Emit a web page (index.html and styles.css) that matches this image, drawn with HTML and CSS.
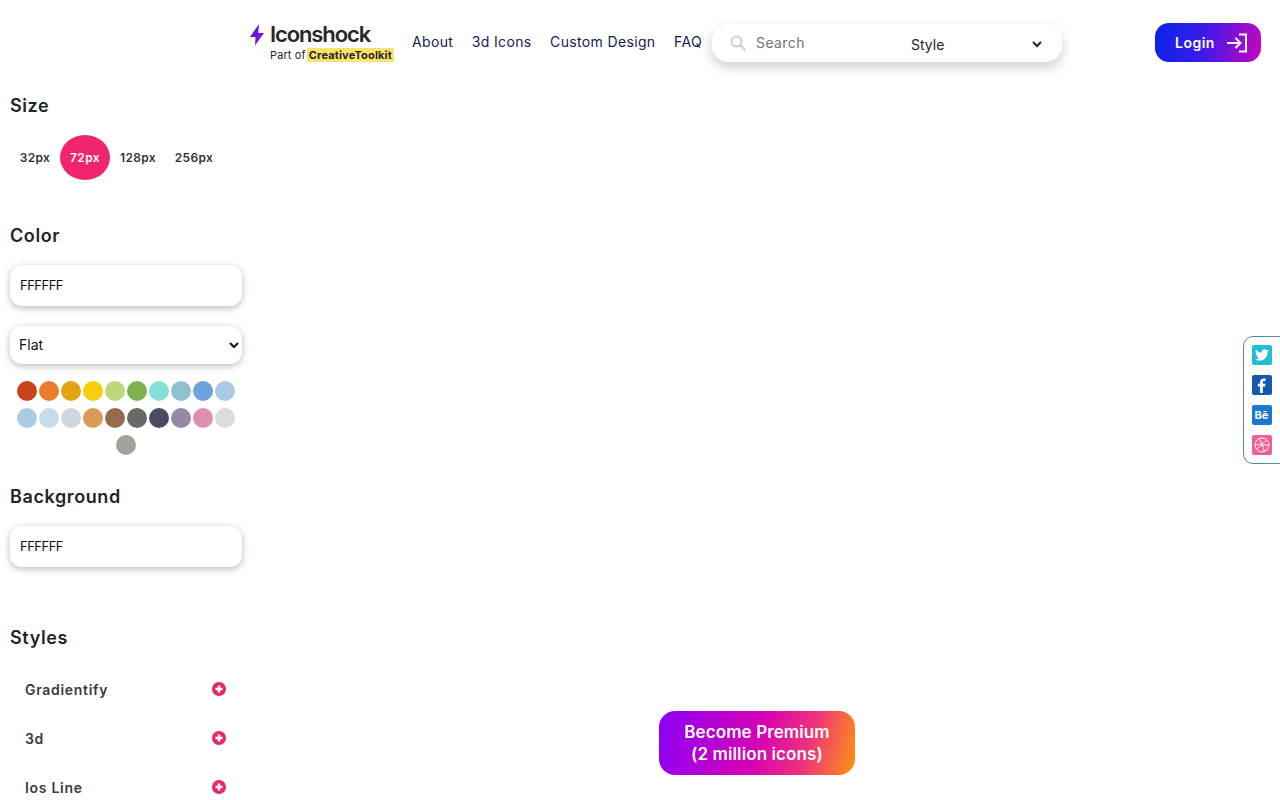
FILE: index.html
```html
<!DOCTYPE html>
<html lang="en">
<head>
<meta charset="utf-8">
<title>Iconshock</title>
<link rel="stylesheet" href="styles.css">
</head>
<body>
<header class="topbar">
  <a class="logo" href="#">
    <svg class="bolt" width="16" height="22" viewBox="0 0 16 22"><defs><linearGradient id="b" x1="0" y1="0" x2="1" y2="1"><stop offset="0" stop-color="#3a1be8"/><stop offset="1" stop-color="#a80be0"/></linearGradient></defs><path d="M10 0 1 13h5.500L6 21.500 15 9H9.200z" fill="url(#b)"/></svg>
    <span class="logo-text"><span class="logo-name">Iconshock</span><span class="logo-sub">Part of <mark>CreativeToolkit</mark></span></span>
  </a>
  <nav class="nav"><a href="#">About</a><a href="#">3d Icons</a><a href="#">Custom Design</a><a href="#">FAQ</a></nav>
  <form class="search">
    <svg class="search-icon" width="16" height="16" viewBox="0 0 16 16" fill="none" stroke="#cfcfcf" stroke-width="2"><circle cx="6.500" cy="6.500" r="5"/><path d="m10.500 10.500 4.500 4.500" stroke-linecap="round"/></svg>
    <input class="search-input" type="text" placeholder="Search">
    <select class="search-style"><option>Style</option></select>
  </form>
  <a class="login" href="#">Login
    <svg width="22" height="20" viewBox="0 0 22 20" fill="none" stroke="#fff" stroke-width="2"><path d="M1 10h13M9.500 5l5 5-5 5"/><path d="M13 1.500h7v17h-7"/></svg>
  </a>
</header>
<div class="layout">
  <aside class="sidebar">
    <h3 class="title">Size</h3>
    <div class="sizes"><a class="size s32">32px</a><a class="size active">72px</a><a class="size s128">128px</a><a class="size s256">256px</a></div>
    <h3 class="title color-title">Color</h3>
    <input class="field" type="text" value="FFFFFF">
    <select class="field flat"><option>Flat</option></select>
    <div class="dots">
      <i class="dot c1"></i><i class="dot c2"></i><i class="dot c3"></i><i class="dot c4"></i><i class="dot c5"></i><i class="dot c6"></i><i class="dot c7"></i><i class="dot c8"></i><i class="dot c9"></i><i class="dot c10"></i>
      <i class="dot c10"></i><i class="dot c11"></i><i class="dot c12"></i><i class="dot c13"></i><i class="dot c14"></i><i class="dot c15"></i><i class="dot c16"></i><i class="dot c17"></i><i class="dot c18"></i><i class="dot c19"></i>
      <i class="dot c20"></i>
    </div>
    <h3 class="title bg-title">Background</h3>
    <input class="field" type="text" value="FFFFFF">
    <h3 class="title styles-title">Styles</h3>
    <ul class="styles">
      <li>Gradientify<svg width="14" height="14" viewBox="0 0 14 14"><circle cx="7" cy="7" r="7" fill="#e8246f"/><path d="M7 3.500v7M3.500 7h7" stroke="#fff" stroke-width="2.400"/></svg></li>
      <li>3d<svg width="14" height="14" viewBox="0 0 14 14"><circle cx="7" cy="7" r="7" fill="#e8246f"/><path d="M7 3.500v7M3.500 7h7" stroke="#fff" stroke-width="2.400"/></svg></li>
      <li>Ios Line<svg width="14" height="14" viewBox="0 0 14 14"><circle cx="7" cy="7" r="7" fill="#e8246f"/><path d="M7 3.500v7M3.500 7h7" stroke="#fff" stroke-width="2.400"/></svg></li>
    </ul>
  </aside>
</div>
<div class="social">
  <a class="soc tw"><svg width="14" height="12" viewBox="0 0 24 20"><path fill="#fff" d="M24 2.400a10 10 0 0 1-2.800.8A5 5 0 0 0 23.300.5a10 10 0 0 1-3.100 1.200 4.900 4.900 0 0 0-8.400 4.500A14 14 0 0 1 1.700.9a4.900 4.900 0 0 0 1.500 6.600 5 5 0 0 1-2.200-.6 4.900 4.900 0 0 0 3.900 4.900 5 5 0 0 1-2.200.1 4.900 4.900 0 0 0 4.600 3.400A10 10 0 0 1 0 17.400 14 14 0 0 0 7.500 19.600c9.100 0 14.300-7.700 14-14.600A10 10 0 0 0 24 2.400z"/></svg></a>
  <a class="soc fb"><svg width="9" height="15" viewBox="0 0 10 17"><path fill="#fff" d="M6.500 17V9.500h2.600l.4-3H6.500V4.700c0-.9.300-1.400 1.500-1.400h1.600V.6C9.300.5 8.400.5 7.300.5 5 .5 3.400 1.900 3.400 4.400v2.100H.8v3h2.600V17z"/></svg></a>
  <a class="soc be">Bē</a>
  <a class="soc dr"><svg width="16" height="16" viewBox="0 0 16 16" fill="none" stroke="#fff" stroke-width=".9"><circle cx="8" cy="8" r="7"/><path d="M5 1.700c2.300 3 4.300 7 5.300 12.800M1 7.500c5 .3 8.800-.9 11-4M2.700 12.500c2-3.500 6-5.500 12.200-4.300"/></svg></a>
</div>
<a class="premium" href="#">Become Premium<br>(2 million icons)</a>
</body>
</html>
```
FILE: styles.css
```css
* { box-sizing: border-box; }
html, body { margin: 0; height: 800px; overflow: hidden; background: #fff; }
body { font-family: Inter, "Open Sans", sans-serif; color: #212529; }
a { text-decoration: none; color: inherit; }

.topbar { display: flex; align-items: flex-start; height: 93px; padding-left: 249px; }
.logo { display: flex; gap: 5px; width: 147px; margin-top: 24px; }
.bolt { flex: none; }
.logo-text { display: flex; flex-direction: column; }
.logo-name { font-size: 22px; line-height: 21px; font-weight: 600; letter-spacing: -1.1px; color: #26262b; }
.logo-sub { margin-top: 2px; font-size: 11px; line-height: 16px; color: #26262b; letter-spacing: .1px; white-space: nowrap; }
.logo-sub mark { background: #fbe26a; color: #26262b; font-weight: 700; letter-spacing: .15px; margin-left: -2px; padding: 0 2px; }
.nav { display: flex; justify-content: space-between; width: 290px; margin: 33px 0 0 16px; font-size: 14px; line-height: 18px; letter-spacing: .35px; color: #14214f; white-space: nowrap; }
.search { display: flex; align-items: center; width: 350px; height: 38px; margin: 24px 0 0 10px; background: #fff; border-radius: 16px; box-shadow: 0 5px 12px rgba(0,0,0,.2); padding-left: 18px; }
.search-icon { flex: none; }
.search-input { width: 147px; margin: -2px 0 0 10px; border: 0; outline: 0; padding: 0; font: 14px Inter, sans-serif; letter-spacing: .4px; color: #777; background: transparent; }
.search-input::placeholder { color: #777; opacity: 1; }
.search-style { width: 138px; margin: 2px 0 0 4px; border: 0; outline: 0; background: transparent; font: 14px Inter, sans-serif; color: #212529; }
.login { display: flex; align-items: center; justify-content: space-between; width: 106px; height: 39px; margin: 23px 0 0 93px; padding: 0 13px 0 20px; border-radius: 14px; background: linear-gradient(100deg, #0a24ea 0%, #3a1ae8 45%, #c905c0 100%); color: #fff; font-size: 14px; font-weight: 600; letter-spacing: .5px; }

.layout { display: flex; }
.sidebar { width: 252px; padding: 0 10px; }
.title { margin: 0; padding-top: 1px; font-size: 18px; line-height: 24px; font-weight: 600; color: #212529; letter-spacing: .6px; }
.sizes { display: flex; align-items: center; height: 45px; margin-top: 17px; font-size: 12px; font-weight: 600; letter-spacing: .35px; color: #333; }
.size { display: flex; align-items: center; justify-content: center; height: 45px; }
.s32 { width: 50px; }
.active { width: 50px; border-radius: 50%; background: #f1246f; color: #fff; }
.s128 { width: 56px; }
.s256 { width: 56px; margin-left: 0; }
.color-title { margin-top: 43px; }
.field { display: block; width: 232px; height: 41px; margin: 17px 0 0; padding: 0 10px 2px; border: 0; outline: 0; border-radius: 12px; background: #fff; box-shadow: 0 2px 7px rgba(0,0,0,.28); font: 13px Inter, sans-serif; letter-spacing: -.5px; color: #111; }
.flat { height: 38px; margin-top: 20px; padding: 0 5px 2px; font-size: 14px; letter-spacing: 0; }
.dots { display: flex; flex-wrap: wrap; justify-content: center; gap: 7px 2px; margin-top: 17px; }
.dot { display: block; width: 20px; height: 20px; border-radius: 50%; }
.c1 { background: #c8421b; } .c2 { background: #ea7c2e; } .c3 { background: #e2a510; } .c4 { background: #f8cd0e; }
.c5 { background: #bcd77a; } .c6 { background: #7fb24f; } .c7 { background: #84e0d8; } .c8 { background: #92c0d0; }
.c9 { background: #6fa3dc; } .c10 { background: #abcae3; } .c11 { background: #c6dbec; } .c12 { background: #cfd6e0; }
.c13 { background: #d99c58; } .c14 { background: #966b4e; } .c15 { background: #6a6766; } .c16 { background: #4b4a63; }
.c17 { background: #9689a6; } .c18 { background: #db90b0; } .c19 { background: #dcdcda; } .c20 { background: #a1a39b; }
.bg-title { margin-top: 29px; }
.bg-title + .field { margin-top: 17px; }
.styles-title { margin-top: 58px; }
.styles { list-style: none; margin: 16px 0 0; padding: 0 16px 0 15px; font-size: 14px; font-weight: 600; letter-spacing: .7px; color: #3a3a3e; }
.styles li { display: flex; align-items: center; justify-content: space-between; height: 49px; padding-bottom: 2px; }
.styles svg { margin-bottom: 2px; }

.social { position: fixed; top: 336px; right: -1px; width: 38px; height: 128px; display: flex; flex-direction: column; align-items: center; justify-content: space-between; padding: 8px 1px 8px 0; border: 1px solid #4f8f97; border-radius: 10px 0 0 10px; background: #fff; }
.soc { display: flex; align-items: center; justify-content: center; width: 20px; height: 20px; border-radius: 2px; color: #fff; font-size: 11px; font-weight: 700; }
.tw { background: #21bcd6; } .fb { background: #1559ae; } .be { background: #1a78d0; } .dr { background: #ee5f97; }
.premium { position: fixed; left: 659px; top: 711px; width: 196px; height: 64px; display: flex; align-items: center; justify-content: center; text-align: center; border-radius: 16px; background: linear-gradient(105deg, #8a00f8 0%, #d800b4 50%, #f0337a 75%, #ff9510 100%); color: #fff; font-size: 17px; line-height: 22px; font-weight: 600; letter-spacing: .1px; }
```
